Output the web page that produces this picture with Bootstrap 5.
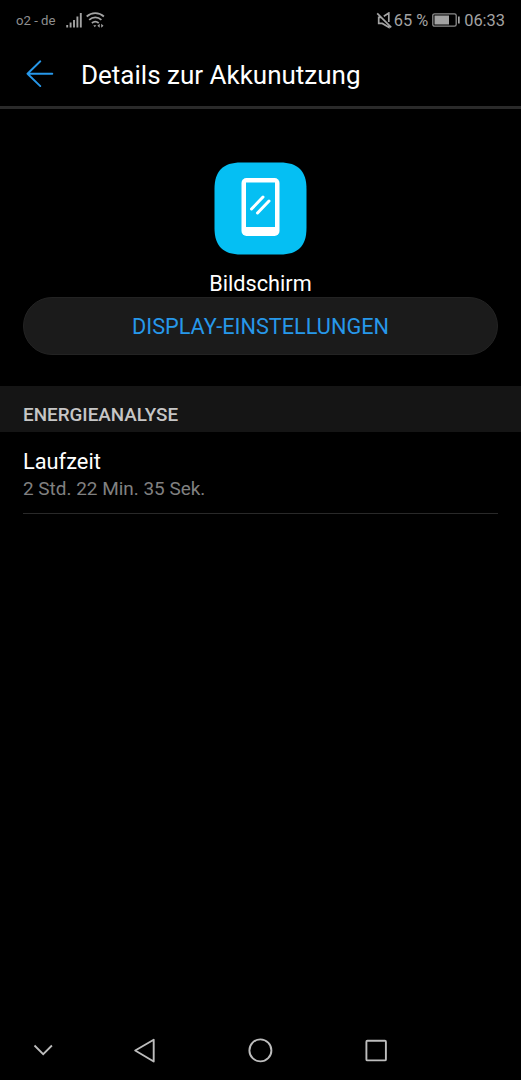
<!DOCTYPE html>
<html lang="de">
<head>
<meta charset="utf-8">
<meta name="viewport" content="width=device-width, initial-scale=1">
<title>Details zur Akkunutzung</title>
<link href="https://cdn.jsdelivr.net/npm/bootstrap@5.3.0/dist/css/bootstrap.min.css" rel="stylesheet">
<script src="https://cdn.jsdelivr.net/npm/bootstrap@5.3.0/dist/js/bootstrap.bundle.min.js" defer></script>
<style>
  body { background: #000; color: #fff; font-family: Roboto, sans-serif; height: 1080px; overflow: hidden; }
  svg { display: block; flex: none; }
  .status-bar { height: 40px; padding: 0 16px; color: #a3a3a3; }
  .carrier { font-size: 13.2px; line-height: 20px; padding-top: 1px; width: 49px; color: #8f8f8f; white-space: nowrap; }
  .stat { font-size: 16.400px; line-height: 20px; padding-top: 1px; white-space: nowrap; }
  .muted { margin-right: 1px; }
  .battery { margin: 0 3px 0 4px; }
  .app-bar { height: 69px; padding: 0 26px; border-bottom: 3px solid #2a2a2a; }
  .app-title { font-size: 26px; line-height: 30px; margin: 3px 0 0 27px; font-weight: 400; white-space: nowrap; }
  .hero { padding: 53px 23px 0; }
  .hero-name { font-size: 21.700px; line-height: 26px; margin-top: 16px; height: 26px; }
  .btn-display, .btn-display:hover { height: 58px; font-size: 21.700px; line-height: 26px; color: #2798ea; background: #1b1b1b; border: 1px solid #232323; padding: 1px 0 0; }
  .section-head { height: 46px; margin-top: 31px; padding: 18px 23px 0; background: #151515; color: #c6c6c6; font-size: 18.850px; line-height: 22px; font-weight: 500; }
  .entry { margin: 0 23px; height: 82px; padding-top: 17px; border-bottom: 1px solid #292929; }
  .entry-name { font-size: 21.800px; line-height: 26px; }
  .entry-value { font-size: 18.950px; line-height: 22px; margin-top: 3px; color: #808080; }
  .nav-keys { height: 60px; padding-left: 33px; }
  .key-back { margin: 0 90px 0 80px; }
  .key-recent { margin-left: 91px; }
</style>
</head>
<body class="d-flex flex-column">
  <div class="status-bar d-flex align-items-center">
    <span class="carrier">o2 - de</span>
    <svg class="me-auto" width="40" height="18" viewBox="65 10 40 18" fill="none" stroke="#a3a3a3">
      <path d="M67.200 26.500v-2.500M70.600 26.500v-5M74 26.500v-7.500M77.400 26.500v-11M80.800 26.500V12" stroke-width="1.900"/>
      <path d="M86.700 15.500c5-4.500 12.200-4.500 17.200 0M89.200 18.800c3.600-3.300 8.600-3.300 12.200 0M91.900 22c2.200-1.800 4.600-1.800 6.800 0" stroke-width="1.800"/>
      <path d="M93.300 24.200h3l-1.500 2zM99.700 22.800l-2.300 2 2.300 2zM101.200 22.800l2.300 2-2.300 2z" fill="#a3a3a3" stroke="none"/>
    </svg>
    <svg class="muted" width="17" height="17" viewBox="376 11 17 17" fill="none" stroke="#a3a3a3" stroke-width="1.700">
      <path d="M377.200 12.300l14 14M383.800 15.200l5-3.200v9M381.300 16.400h-2.600v6h3.600l6.500 3.800v-2.500"/>
    </svg>
    <span class="stat">65 %</span>
    <svg class="battery" width="29" height="14" viewBox="0 0 29 14">
      <rect x=".8" y=".8" width="23.400" height="12.400" rx="1.800" fill="none" stroke="#8c8c8c" stroke-width="1.300"/>
      <path d="M2.500 2.500H17v9H2.500z" fill="#a3a3a3"/><path d="M26 3.500h1.700v7H26z" fill="#a3a3a3"/>
    </svg>
    <span class="stat">06:33</span>
  </div>

  <header class="app-bar d-flex align-items-center">
    <svg width="28" height="28" viewBox="26 59 28 28" fill="none" stroke="#2798ea" stroke-width="1.900" stroke-linecap="round" stroke-linejoin="round"><path d="M52.300 73.700H27.500M40.300 61.300L27.500 73.700l12.800 12.400"/></svg>
    <h1 class="app-title">Details zur Akkunutzung</h1>
  </header>

  <main class="flex-grow-1">
    <section class="hero d-flex flex-column align-items-center">
      <svg width="93" height="93" viewBox="0 0 93 93">
        <path d="M27 .5h39C84 .5 92.500 9 92.500 27v39c0 18-8.500 26.500-26.500 26.500H27C9 92.500.5 84 .5 66V27C.5 9 9 .5 27 .5z" fill="#05bff3"/>
        <rect x="27.500" y="16" width="38" height="58" rx="5" fill="#fff"/>
        <path d="M32 20.500h29V65H32z" fill="#05bff3"/>
        <path d="M37.500 47L49 35M43.500 51L55 39" stroke="#fff" stroke-width="3" stroke-linecap="round"/>
      </svg>
      <div class="hero-name">Bildschirm</div>
      <button type="button" class="btn btn-display rounded-pill w-100">DISPLAY-EINSTELLUNGEN</button>
    </section>
    <h2 class="section-head mb-0">ENERGIEANALYSE</h2>
    <div class="entry">
      <div class="entry-name">Laufzeit</div>
      <div class="entry-value">2 Std. 22 Min. 35 Sek.</div>
    </div>
  </main>

  <nav class="nav-keys d-flex align-items-center">
    <svg width="20" height="24" viewBox="33 1038 20 24" fill="none" stroke="#bdbdbd" stroke-width="1.800"><path d="M34.500 1045.500l8.700 8.700 8.700-8.700"/></svg>
    <svg class="key-back" width="24" height="26" viewBox="133 1037 24 26" fill="none" stroke="#bdbdbd" stroke-width="1.900" stroke-linejoin="round"><path d="M153.700 1039.800v21.700l-18.500-11z"/></svg>
    <svg width="26" height="26" viewBox="247 1037 26 26" fill="none" stroke="#bdbdbd" stroke-width="1.900"><circle cx="260.400" cy="1050.400" r="11"/></svg>
    <svg class="key-recent" width="24" height="26" viewBox="364 1037 24 26" fill="none" stroke="#bdbdbd" stroke-width="1.900"><rect x="366.400" y="1040.700" width="19.500" height="19.700" rx="1"/></svg>
  </nav>
</body>
</html>
